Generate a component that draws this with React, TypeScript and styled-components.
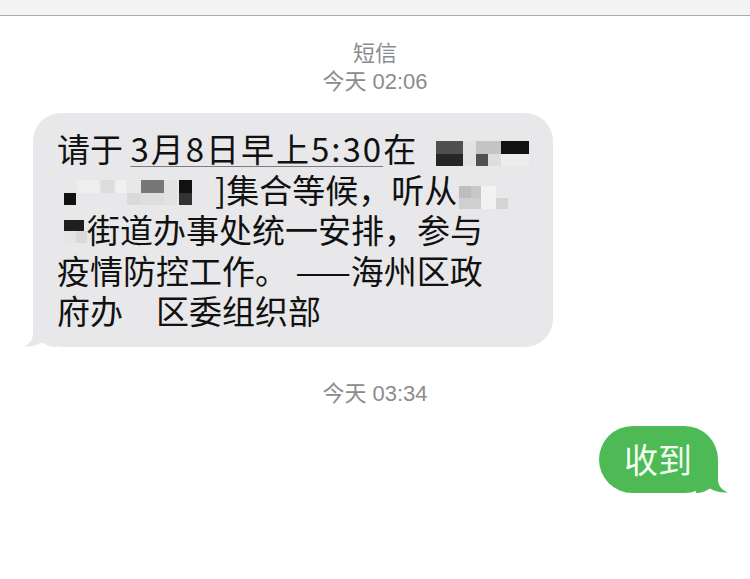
import React from "react";
import styled, { createGlobalStyle } from "styled-components";

const GlobalStyle = createGlobalStyle`
    html, body {
        margin: 0;
        padding: 0;
        background: #ffffff;
    }
    body {
        width: 750px;
        height: 579px;
        overflow: hidden;
        font-family: "Noto Sans CJK SC", "Noto Sans", sans-serif;
    }
`;

const Screen = styled.div`
    width: 750px;
    height: 579px;
    display: flex;
    flex-direction: column;
    background: #ffffff;
`;

const TopBar = styled.div`
    height: 15px;
    flex-shrink: 0;
    background: #f4f4f4;
    border-bottom: 1px solid #ababab;
`;

const Stamp = styled.div<{ $top: number }>`
    margin-top: ${(p) => p.$top}px;
    text-align: center;
    font-family: "Liberation Sans", "Noto Sans CJK SC", sans-serif;
    font-size: 22px;
    line-height: 26px;
    color: #8c8c8c;
`;

const Row = styled.div<{ $side: "left" | "right"; $top: number }>`
    display: flex;
    justify-content: ${(p) => (p.$side === "left" ? "flex-start" : "flex-end")};
    margin-top: ${(p) => p.$top}px;
    padding: 0 32px 0 33px;
`;

const Bubble = styled.div<{ $mine?: boolean }>`
    position: relative;
    box-sizing: border-box;
    background: ${(p) => (p.$mine ? "#4dba56" : "#e8e8ea")};
    color: ${(p) => (p.$mine ? "#f3fff1" : "#111111")};
    border-radius: ${(p) => (p.$mine ? "34px" : "28px")};
    padding: ${(p) => (p.$mine ? "11px 26px 12px 25px" : "15px 20px 16px 24px")};
    width: ${(p) => (p.$mine ? "auto" : "520px")};
    font-size: ${(p) => (p.$mine ? "34px" : "33px")};
    line-height: ${(p) => (p.$mine ? "44px" : "40.5px")};

    .tail {
        position: absolute;
        bottom: 0;
    }
    .tail.left {
        left: -9px;
    }
    .tail.right {
        right: -10px;
    }
`;

const Line = styled.div`
    white-space: pre;
    height: 40.5px;
`;

const Link = styled.span`
    letter-spacing: 2px;
    text-decoration: underline;
    text-decoration-color: #7d7d7d;
    text-decoration-thickness: 1px;
    text-underline-offset: 4px;
`;

const Pixels = styled.svg`
    display: inline-block;
    vertical-align: top;
`;

type Cell = [number, number, number, number, string];

const Mosaic = ({ width, cells }: { width: number; cells: Cell[] }) => (
    <Pixels width={width} height={40} viewBox={`0 0 ${width} 40`}>
        {cells.map(([x, y, w, h, c], i) => (
            <rect key={i} x={x} y={y} width={w} height={h} fill={c} />
        ))}
    </Pixels>
);

const mosaicA: Cell[] = [
    [20, 13, 27, 13, "#505050"],
    [20, 26, 27, 12, "#262626"],
    [47, 13, 13, 25, "#e2e2e2"],
    [60, 13, 25, 13, "#c4c4c4"],
    [60, 26, 12, 12, "#505050"],
    [72, 26, 13, 12, "#dedede"],
    [85, 13, 28, 13, "#111111"],
    [85, 26, 28, 12, "#ececec"],
];

const mosaicB: Cell[] = [
    [7, 24, 12, 12, "#111111"],
    [20, 11, 22, 13, "#eeeeee"],
    [44, 11, 13, 13, "#dcdcdc"],
    [59, 11, 10, 13, "#f0f0f0"],
    [70, 24, 14, 12, "#dadada"],
    [84, 11, 23, 13, "#777777"],
    [84, 24, 23, 12, "#dedede"],
    [107, 11, 13, 25, "#e2e2e2"],
    [122, 11, 13, 13, "#111111"],
    [122, 24, 13, 12, "#333333"],
];

const mosaicC: Cell[] = [
    [2, 17, 12, 12, "#bdbdbd"],
    [14, 17, 10, 12, "#c8c8c8"],
    [2, 29, 22, 11, "#cfcfcf"],
    [24, 17, 15, 23, "#f2f2f2"],
    [39, 29, 12, 11, "#d4d4d4"],
];

const mosaicD: Cell[] = [
    [7, 11, 20, 11, "#1e1e1e"],
    [7, 22, 12, 12, "#e4e4e4"],
    [19, 22, 11, 12, "#dadada"],
];

const LeftTail = ({ color }: { color: string }) => (
    <svg className="tail left" width="32" height="32" viewBox="0 0 32 32">
        <path d="M9 0 L9 18 C9 25 5 29 0 31.5 C7 32 13 30.5 18 27.5 C22 30 26 32 32 32 L32 0 Z" fill={color} />
    </svg>
);

const RightTail = ({ color }: { color: string }) => (
    <svg className="tail right" width="32" height="32" viewBox="0 0 32 32">
        <path d="M22 0 L22 18 C22 25 26 29 32 31.5 C25 32 19 30.5 14 27.5 C10 30 6 32 0 32 L0 0 Z" fill={color} />
    </svg>
);

const App = () => {
    return (
        <Screen>
            <GlobalStyle />
            <TopBar />
            <Stamp $top={25}>短信</Stamp>
            <Stamp $top={2}>今天 02:06</Stamp>

            <Row $side="left" $top={18}>
                <Bubble>
                    <Line>
                        请于 <Link>3月8日早上5:30</Link>在<Mosaic width={116} cells={mosaicA} />
                    </Line>
                    <Line>
                        <Mosaic width={158} cells={mosaicB} />]集合等候，听从<Mosaic width={52} cells={mosaicC} />
                    </Line>
                    <Line>
                        <Mosaic width={30} cells={mosaicD} />街道办事处统一安排，参与
                    </Line>
                    <Line>疫情防控工作。 ——海州区政</Line>
                    <Line>府办　区委组织部</Line>
                    <LeftTail color="#e8e8ea" />
                </Bubble>
            </Row>

            <Stamp $top={34}>今天 03:34</Stamp>

            <Row $side="right" $top={19}>
                <Bubble $mine>
                    收到
                    <RightTail color="#4dba56" />
                </Bubble>
            </Row>
        </Screen>
    );
};

export default App;
